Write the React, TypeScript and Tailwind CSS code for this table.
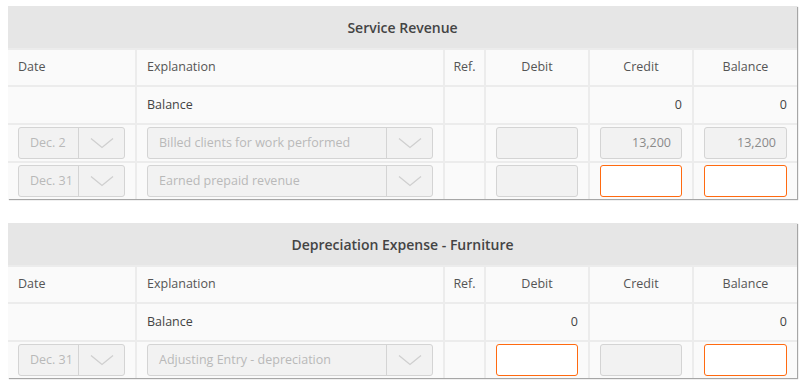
import React from "react";

type Cell =
  | { kind: "text"; value: string; align?: "left" | "right" | "center" }
  | { kind: "select"; value: string }
  | { kind: "input"; value: string; state: "disabled" | "open" }
  | { kind: "empty" };

interface LedgerProps {
  title: string;
  rows: Cell[][];
}

const columns = ["Date", "Explanation", "Ref.", "Debit", "Credit", "Balance"];

function Chevron() {
  return (
    <svg width="24" height="12" viewBox="0 0 24 12" fill="none">
      <path d="M1 1.5 L12 10.5 L23 1.5" stroke="#cfcfcf" strokeWidth="1.3" />
    </svg>
  );
}

function SelectBox({ value, narrow }: { value: string; narrow?: boolean }) {
  return (
    <div className="flex h-[32px] w-full rounded-[3px] border border-[#d4d4d4] bg-[#f2f2f2]">
      <div className="flex flex-1 items-center truncate pl-[11px] text-[12.5px] text-[#b9b9b9]">
        {value}
      </div>
      <div
        className={`flex items-center justify-center border-l border-[#d4d4d4] ${
          narrow ? "w-[46px]" : "w-[46px]"
        }`}
      >
        <Chevron />
      </div>
    </div>
  );
}

function NumberBox({ value, state }: { value: string; state: "disabled" | "open" }) {
  return (
    <div
      className={
        state === "open"
          ? "flex h-[32px] w-full items-center justify-end rounded-[3px] border border-[#ff6a10] bg-white pr-[10px]"
          : "flex h-[32px] w-full items-center justify-end rounded-[3px] border border-[#d4d4d4] bg-[#f2f2f2] pr-[10px] text-[12.5px] text-[#8a8a8a]"
      }
    >
      {value}
    </div>
  );
}

function LedgerCell({ cell, col }: { cell: Cell; col: number }) {
  if (cell.kind === "select") {
    return (
      <div className="flex h-[36px] items-center bg-[#fafafa] px-[10px]">
        <SelectBox value={cell.value} narrow={col === 0} />
      </div>
    );
  }
  if (cell.kind === "input") {
    return (
      <div className="flex h-[36px] items-center bg-[#fafafa] px-[10px]">
        <NumberBox value={cell.value} state={cell.state} />
      </div>
    );
  }
  if (cell.kind === "text") {
    const align =
      cell.align === "right" ? "justify-end" : cell.align === "center" ? "justify-center" : "justify-start";
    return (
      <div className={`flex h-[36px] items-center bg-[#fafafa] px-[10px] text-[12.5px] text-[#444] ${align}`}>
        {cell.value}
      </div>
    );
  }
  return <div className="h-[36px] bg-[#fafafa]" />;
}

function Ledger({ title, rows }: LedgerProps) {
  return (
    <div className="w-[789px] bg-[#ececec] shadow-[1px_1px_1px_rgba(0,0,0,0.35)]">
      <div className="flex h-[42px] items-center justify-center bg-[#e6e6e6] text-[14px] font-semibold text-[#444]">
        {title}
      </div>
      <div className="grid grid-cols-[127px_306px_39px_102px_102px_1fr] gap-[2px] pt-[2px]">
        {columns.map((c, i) => (
          <div
            key={c}
            className={`flex h-[35px] items-center bg-[#fafafa] px-[10px] text-[12.5px] text-[#555] ${
              i < 2 ? "justify-start" : "justify-center"
            }`}
          >
            {c}
          </div>
        ))}
        {rows.map((row, r) =>
          row.map((cell, c) => <LedgerCell key={`${r}-${c}`} cell={cell} col={c} />)
        )}
      </div>
    </div>
  );
}

export default function App() {
  const serviceRevenue: Cell[][] = [
    [
      { kind: "empty" },
      { kind: "text", value: "Balance" },
      { kind: "empty" },
      { kind: "empty" },
      { kind: "text", value: "0", align: "right" },
      { kind: "text", value: "0", align: "right" },
    ],
    [
      { kind: "select", value: "Dec. 2" },
      { kind: "select", value: "Billed clients for work performed" },
      { kind: "empty" },
      { kind: "input", value: "", state: "disabled" },
      { kind: "input", value: "13,200", state: "disabled" },
      { kind: "input", value: "13,200", state: "disabled" },
    ],
    [
      { kind: "select", value: "Dec. 31" },
      { kind: "select", value: "Earned prepaid revenue" },
      { kind: "empty" },
      { kind: "input", value: "", state: "disabled" },
      { kind: "input", value: "", state: "open" },
      { kind: "input", value: "", state: "open" },
    ],
  ];

  const depreciation: Cell[][] = [
    [
      { kind: "empty" },
      { kind: "text", value: "Balance" },
      { kind: "empty" },
      { kind: "text", value: "0", align: "right" },
      { kind: "empty" },
      { kind: "text", value: "0", align: "right" },
    ],
    [
      { kind: "select", value: "Dec. 31" },
      { kind: "select", value: "Adjusting Entry - depreciation" },
      { kind: "empty" },
      { kind: "input", value: "", state: "open" },
      { kind: "input", value: "", state: "disabled" },
      { kind: "input", value: "", state: "open" },
    ],
  ];

  return (
    <div
      className="min-h-screen bg-white pl-[8px] pt-[6px]"
      style={{ fontFamily: '"Open Sans", "Noto Sans", sans-serif' }}
    >
      <div className="flex flex-col gap-[24px]">
        <Ledger title="Service Revenue" rows={serviceRevenue} />
        <Ledger title="Depreciation Expense - Furniture" rows={depreciation} />
      </div>
    </div>
  );
}
